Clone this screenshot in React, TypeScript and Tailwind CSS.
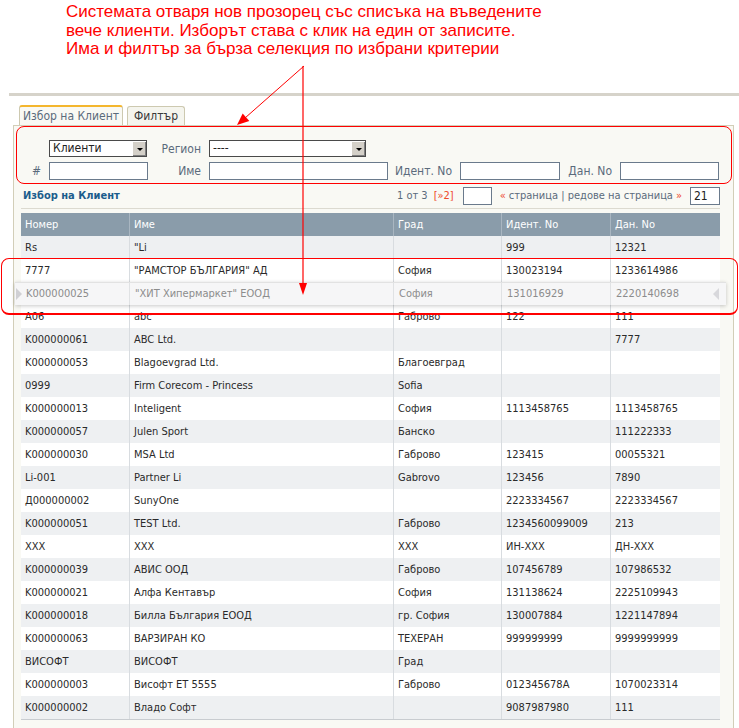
import React from "react";

const rows: string[][] = [
  ["Rs", "\"Li", "", "999", "12321"],
  ["7777", "\"РАМСТОР БЪЛГАРИЯ\" АД", "София", "130023194", "1233614986"],
  ["K000000025", "\"ХИТ Хипермаркет\" ЕООД", "София", "131016929", "2220140698"],
  ["A06", "abc", "Габрово", "122", "111"],
  ["K000000061", "ABC Ltd.", "", "", "7777"],
  ["K000000053", "Blagoevgrad Ltd.", "Благоевград", "", ""],
  ["0999", "Firm Corecom - Princess", "Sofia", "", ""],
  ["K000000013", "Inteligent", "София", "1113458765", "1113458765"],
  ["K000000057", "Julen Sport", "Банско", "", "111222333"],
  ["K000000030", "MSA Ltd", "Габрово", "123415", "00055321"],
  ["Li-001", "Partner Li", "Gabrovo", "123456", "7890"],
  ["Д000000002", "SunyOne", "", "2223334567", "2223334567"],
  ["K000000051", "TEST Ltd.", "Габрово", "1234560099009", "213"],
  ["XXX", "XXX", "XXX", "ИН-XXX", "ДН-XXX"],
  ["K000000039", "АВИС ООД", "Габрово", "107456789", "107986532"],
  ["K000000021", "Алфа Кентавър", "София", "131138624", "2225109943"],
  ["K000000018", "Билла България ЕООД", "гр. София", "130007884", "1221147894"],
  ["K000000063", "ВАРЗИРАН КО", "ТЕХЕРАН", "999999999", "9999999999"],
  ["ВИСОФТ", "ВИСОФТ", "Град", "", ""],
  ["K000000003", "Висофт ЕТ 5555", "Габрово", "012345678A", "1070023314"],
  ["K000000002", "Владо Софт", "", "9087987980", "111"],
];

const headers = ["Номер", "Име", "Град", "Идент. No", "Дан. No"];

function Select({ value, width }: { value: string; width: string }) {
  return (
    <div className={`${width} h-[17px] flex border border-[#4a4a4a] bg-white`}>
      <div className="flex-1 pl-[3px] text-[12px] leading-[15px] text-[#222]">{value}</div>
      <div className="w-[14px] h-[15px] bg-[#d4d0c8] border-l border-t border-white flex items-center justify-center shadow-[inset_-1px_-1px_0_#808080]">
        <div className="w-0 h-0 border-l-[3px] border-r-[3px] border-t-[3px] border-l-transparent border-r-transparent border-t-black" />
      </div>
    </div>
  );
}

function Label({ text, width }: { text: string; width: string }) {
  return <div className={`${width} pr-[8px] text-right text-[#5b6b7c] text-[12px]`}>{text}</div>;
}

function Input({ width, value }: { width: string; value?: string }) {
  return (
    <div className={`${width} h-[18px] border border-[#6a7a8c] bg-white pl-[3px] text-[12px] leading-[16px] text-[#222]`}>
      {value}
    </div>
  );
}

export default function App() {
  return (
    <div
      className="relative w-[739px] h-[728px] overflow-hidden bg-white"
      style={{ fontFamily: "'DejaVu Sans Condensed', 'DejaVu Sans', sans-serif" }}
    >
      {/* note */}
      <div className="h-[93px] pl-[66px] pt-[3px] text-[17px] leading-[18.5px] text-[#ff0000] font-['Liberation_Sans',sans-serif]">
        <div>Системата отваря нов прозорец със списъка на въведените</div>
        <div>вече клиенти. Изборът става с клик на един от записите.</div>
        <div>Има и филтър за бърза селекция по избрани критерии</div>
      </div>
      <div className="ml-[9px] h-[3px] bg-[#d6d3ca]" />

      {/* tabs */}
      <div className="mt-[9px] h-[20px] pl-[19px] flex items-end gap-[4px]">
        <div className="h-[20px] w-[104px] flex items-center justify-center border border-b-0 border-[#cdc9b0] border-t-2 border-t-[#f4b62e] rounded-t-[3px] bg-[#f9f9f4] text-[12px] text-[#5b6b7c]">
          Избор на Клиент
        </div>
        <div className="h-[19px] w-[58px] flex items-center justify-center border border-b-0 border-[#cdc9b0] rounded-t-[3px] bg-[#f5f5ee] text-[12px] text-[#3a3a3a]">
          Филтър
        </div>
      </div>

      {/* panel */}
      <div className="ml-[13px] w-[721px] h-[620px] border-l border-r border-t border-[#d2ceb8] bg-[#f9f9f4] pt-[14px]">
        <div className="flex items-center h-[17px]">
          <Label text="" width="w-[35px]" />
          <Select value="Клиенти" width="w-[98px]" />
          <Label text="Регион" width="w-[62px]" />
          <Select value="----" width="w-[157px]" />
        </div>
        <div className="mt-[5px] flex items-center h-[18px]">
          <Label text="#" width="w-[35px]" />
          <Input width="w-[99px]" />
          <Label text="Име" width="w-[61px]" />
          <Input width="w-[179px]" />
          <Label text="Идент. No" width="w-[72px]" />
          <Input width="w-[100px]" />
          <Label text="Дан. No" width="w-[60px]" />
          <Input width="w-[99px]" />
        </div>

        {/* list header */}
        <div className="mt-[6px] ml-[9px] w-[697px] h-[20px] flex items-center justify-between">
          <div className="text-[11px] font-bold text-[#1c5d8c]">Избор на Клиент</div>
          <div className="flex items-center text-[11px] text-[#5b6b7c]">
            <span>1 от 3</span>
            <span className="ml-[6px] text-[#ee4a2a]">[»2]</span>
            <div className="ml-[9px] w-[29px] h-[18px] border border-[#6a7a8c] bg-white" />
            <span className="ml-[8px] text-[#ee4a2a]">«</span>
            <span className="ml-[3px]">страница | редове на страница</span>
            <span className="ml-[3px] text-[#ee4a2a]">»</span>
            <div className="ml-[8px] w-[30px] h-[18px] border border-[#6a7a8c] bg-white pl-[3px] leading-[16px] text-[12px] text-[#222]">21</div>
          </div>
        </div>
        <div className="mt-[2px] ml-[7px] w-[699px] h-px bg-[#dcdad0]" />

        {/* table */}
        <div className="mt-[4px] ml-[7px] w-[699px] border-b border-[#c8ccd0] text-[11px]">
          <div className="grid grid-cols-[109px_264px_108px_109px_109px] h-[23px] bg-[#8a9caa] text-white">
            {headers.map((h, i) => (
              <div key={i} className="pl-[4px] leading-[23px] border-r border-[#a9b6c1] last:border-r-0">
                {h}
              </div>
            ))}
          </div>
          {rows.map((r, ri) => {
            const hot = ri === 2;
            if (hot) {
              return (
                <div
                  key={ri}
                  className="relative z-10 -mx-[6px] px-[6px] h-[23px] bg-[#f6f6f7] shadow-[0_1px_4px_rgba(0,0,0,0.22)] border-t border-[#e2e2e2] text-[#8c8c8c]"
                >
                  <div className="grid grid-cols-[109px_264px_108px_109px_109px] h-full">
                    {r.map((c, ci) => (
                      <div key={ci} className="pl-[5px] leading-[22px] border-r border-[#e0e2e4] last:border-r-0 whitespace-nowrap">
                        {c}
                      </div>
                    ))}
                  </div>
                  <div className="absolute left-[1px] top-[5px] w-0 h-0 border-t-[6px] border-b-[6px] border-l-[6px] border-t-transparent border-b-transparent border-l-[#d0d0d4]" />
                  <div className="absolute right-[7px] top-[5px] w-0 h-0 border-t-[6px] border-b-[6px] border-r-[6px] border-t-transparent border-b-transparent border-r-[#d8d8dc]" />
                </div>
              );
            }
            return (
              <div
                key={ri}
                className={`grid grid-cols-[109px_264px_108px_109px_109px] h-[23px] text-[#2a2a2a] ${ri % 2 === 0 ? "bg-[#eef0f2]" : "bg-white"}`}
              >
                {r.map((c, ci) => (
                  <div key={ci} className="pl-[4px] leading-[23px] border-r border-[#d8dce0] last:border-r-0 whitespace-nowrap">
                    {c}
                  </div>
                ))}
              </div>
            );
          })}
        </div>
      </div>

      {/* annotation overlays */}
      <div className="absolute left-[16px] top-[126px] w-[716px] h-[58px] border border-[#ff0000] rounded-[8px] pointer-events-none" />
      <div className="absolute left-[1px] top-[258px] w-[737px] h-[57px] border border-b-2 border-[#ff0000] rounded-[8px] pointer-events-none z-20" />
      <svg className="absolute left-0 top-0 pointer-events-none z-20" width="739" height="728">
        <line x1="304" y1="66" x2="245" y2="118" stroke="#ff0000" strokeWidth="1" />
        <polygon points="237,125 249.3,120.9 242.7,113.4" fill="#ff0000" />
        <line x1="303" y1="66" x2="303" y2="284" stroke="#ff0000" strokeWidth="1.2" />
        <polygon points="299,283 307,283 303,295" fill="#ff0000" />
      </svg>
    </div>
  );
}
